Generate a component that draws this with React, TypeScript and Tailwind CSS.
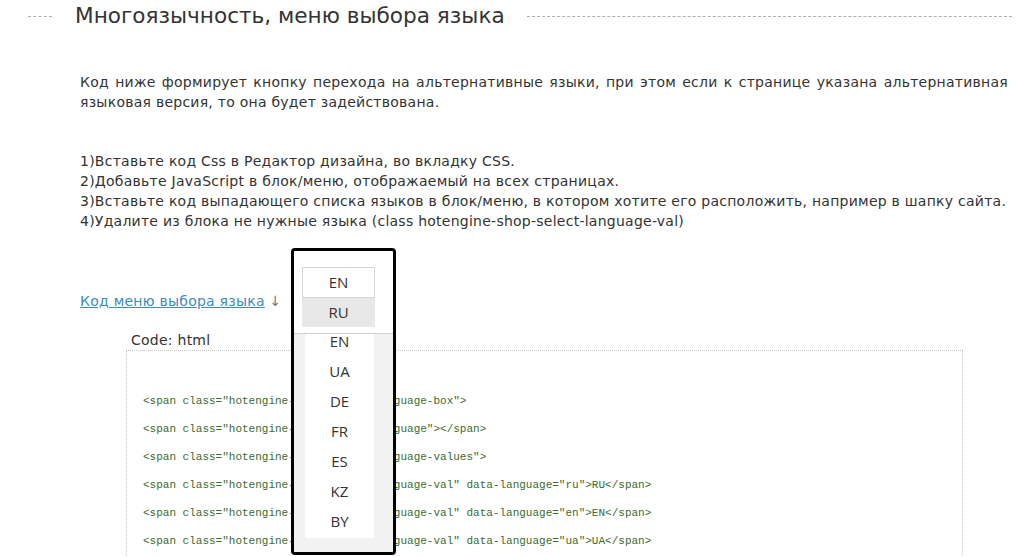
import React from 'react';

const steps = [
  '1)Вставьте код Css в Редактор дизайна, во вкладку CSS.',
  '2)Добавьте JavaScript в блок/меню, отображаемый на всех страницах.',
  '3)Вставьте код выпадающего списка языков в блок/меню, в котором хотите его расположить, например в шапку сайта.',
  '4)Удалите из блока не нужные языка (class hotengine-shop-select-language-val)',
];

const codeLines = [
  '<span class="hotengine-shop-select-language-box">',
  '<span class="hotengine-shop-select-language"></span>',
  '<span class="hotengine-shop-select-language-values">',
  '<span class="hotengine-shop-select-language-val" data-language="ru">RU</span>',
  '<span class="hotengine-shop-select-language-val" data-language="en">EN</span>',
  '<span class="hotengine-shop-select-language-val" data-language="ua">UA</span>',
  '<span class="hotengine-shop-select-language-val" data-language="de">DE</span>',
];

const langs = ['EN', 'UA', 'DE', 'FR', 'ES', 'KZ', 'BY'];

const LangDropdown: React.FC = () => (
  <div className="absolute left-[291px] top-[248px] w-[105px] h-[307px] border-[3px] border-black rounded-[4px] bg-white overflow-hidden flex flex-col font-['Open_Sans',sans-serif] text-[15px] text-[#333]">
    <div className="pt-[16px] pl-[8px] pb-[6px]">
      <div className="w-[73px] h-[31px] border border-[#d4d4d4] flex items-center justify-center bg-white">EN</div>
      <div className="w-[73px] h-[29px] bg-[#e8e8e8] flex items-center justify-center">RU</div>
    </div>
    <div className="flex-1 bg-[#f2f2f2] border-t border-[#d0d0d0] pl-[11px] pr-[19px] pb-[14px] flex flex-col">
      <div className="flex-1 bg-white overflow-hidden">
        <div className="-mt-[8px] flex flex-col">
          {langs.map((l, i) => (
            <div key={i} className="h-[30px] flex items-center justify-center">{l}</div>
          ))}
        </div>
      </div>
    </div>
  </div>
);

export default function App() {
  return (
    <div className="relative w-[1016px] h-[557px] overflow-hidden bg-white text-[#333] font-['DejaVu_Sans',Verdana,sans-serif]">
      <div className="flex items-center h-[32px] pr-[4px]">
        <div className="ml-[28px] w-[24px] border-t border-dashed border-[#b0b0b0]" />
        <h1 className="ml-[23px] text-[21.6px] leading-[30px] text-[#333] font-normal whitespace-nowrap">Многоязычность, меню выбора языка</h1>
        <div className="ml-[22px] flex-1 border-t border-dashed border-[#b0b0b0]" />
      </div>

      <div className="tracking-[0.25px]">
        <p className="mt-[40px] ml-[80px] mr-[8px] text-[14px] leading-[20px] text-justify">
          Код ниже формирует кнопку перехода на альтернативные языки, при этом если к странице указана альтернативная языковая версия, то она будет задействована.
        </p>

        <div className="mt-[39px] ml-[80px] text-[14px] leading-[20px]">
          {steps.map((s, i) => (
            <div key={i} className="whitespace-nowrap">{s}</div>
          ))}
        </div>

        <div className="mt-[60px] ml-[80px] text-[14px] leading-[20px]">
          <a className="text-[#3d8db8] underline">Код меню выбора языка</a>
          <span className="text-[#777]"> ↓</span>
        </div>

        <div className="ml-[131px] mt-[19px] text-[14px] leading-[20px]">Code: html</div>
      </div>
      <div className="ml-[126px] mr-[53px] border border-dotted border-[#c8c8c8] pt-[36px] pl-[16px] font-['Liberation_Mono',monospace] text-[11px] text-[#3a6b30]">
        {codeLines.map((c, i) => (
          <div key={i} className="h-[28px] leading-[28px] whitespace-pre">{c}</div>
        ))}
      </div>

      <LangDropdown />
    </div>
  );
}
